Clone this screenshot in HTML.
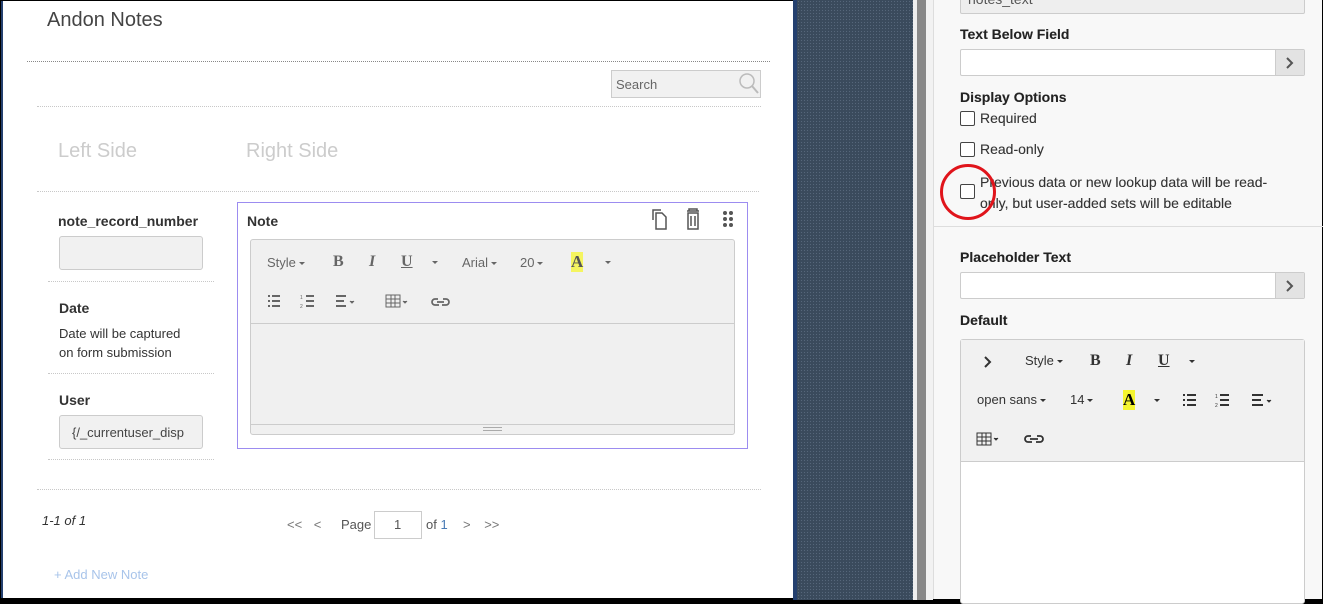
<!DOCTYPE html>
<html><head><meta charset="utf-8"><style>
*{box-sizing:border-box;margin:0;padding:0}
body{width:1323px;height:600px;overflow:hidden;background:#000;font-family:"Liberation Sans",sans-serif;position:relative}
.a{position:absolute}
.t{position:absolute;white-space:nowrap}
.dot{position:absolute;height:0;border-top:1px dotted #c8c8c8}
.tb{color:#666;font-size:13px}
.car{display:inline-block;width:0;height:0;border-left:3px solid transparent;border-right:3px solid transparent;border-top:3px solid #666;vertical-align:middle;margin-left:3px}
.cb{position:absolute;width:15px;height:15px;border:1px solid #444;border-radius:2px;background:#fff}
.rl{position:absolute;font-size:14px;color:#222;white-space:nowrap;font-weight:bold;-webkit-text-stroke:0.1px}
.rl.n{font-weight:normal}
.inp{position:absolute;height:27px;background:#fff;border:1px solid #ccc;border-radius:2px}
.btn{position:absolute;right:0;top:0;width:29px;height:25px;background:#e3e3e3;border-left:1px solid #ccc}
</style></head><body>
<!-- left panel -->
<div class="a" style="left:1px;top:1px;width:792px;height:597px;background:#fff;border-left:2px solid #24406f"></div>
<div class="t" style="left:47px;top:9px;font-size:20px;color:#444">Andon Notes</div>
<div class="dot" style="left:27px;top:61px;width:743px;border-top:1px dotted #888"></div>
<div class="a" style="left:611px;top:70px;width:150px;height:28px;background:#f1f1f1;border:1px solid #ccc"></div>
<div class="t" style="left:616px;top:77px;font-size:13px;color:#666">Search</div>
<svg class="a" style="left:738px;top:72px" width="22" height="24"><circle cx="9" cy="9" r="7" fill="none" stroke="#bbb" stroke-width="1.5"/><line x1="14" y1="14" x2="20" y2="21" stroke="#bbb" stroke-width="2"/></svg>
<div class="dot" style="left:37px;top:106px;width:724px"></div>
<div class="t" style="left:58px;top:140px;font-size:20px;color:#ccc">Left Side</div>
<div class="t" style="left:246px;top:140px;font-size:20px;color:#ccc">Right Side</div>
<div class="dot" style="left:37px;top:191px;width:722px"></div>
<div class="t" style="left:58px;top:213px;font-size:14px;font-weight:bold;color:#333">note_record_number</div>
<div class="a" style="left:59px;top:236px;width:144px;height:34px;background:#f1f1f1;border:1px solid #ccc;border-radius:3px"></div>
<div class="dot" style="left:48px;top:281px;width:166px"></div>
<div class="t" style="left:59px;top:300px;font-size:14px;font-weight:bold;color:#333">Date</div>
<div class="t" style="left:59px;top:324px;font-size:13px;color:#333;line-height:19px">Date will be captured<br>on form submission</div>
<div class="dot" style="left:48px;top:373px;width:166px"></div>
<div class="t" style="left:59px;top:392px;font-size:14px;font-weight:bold;color:#333">User</div>
<div class="a" style="left:59px;top:415px;width:144px;height:34px;background:#f1f1f1;border:1px solid #ccc;border-radius:3px"></div>
<div class="t" style="left:72px;top:425px;font-size:13px;color:#444">{/_currentuser_disp</div>
<div class="dot" style="left:48px;top:459px;width:166px"></div>
<!-- note box -->
<div class="a" style="left:237px;top:202px;width:511px;height:247px;border:1px solid #9c8cf0;background:#fff"></div>
<div class="t" style="left:247px;top:213px;font-size:14px;font-weight:bold;color:#333">Note</div>
<svg class="a" style="left:650px;top:207px" width="90" height="24" fill="none" stroke="#555" stroke-width="1.5">
<path d="M3 13V3h8M6 6h6l4 4v12H6z"/>
<path d="M37 4h12M39 4v-2h8v2M38 6h10v16H38zM41 9v10M45 9v10"/>
<g fill="#555" stroke="none"><circle cx="75" cy="6" r="2"/><circle cx="81" cy="6" r="2"/><circle cx="75" cy="12" r="2"/><circle cx="81" cy="12" r="2"/><circle cx="75" cy="18" r="2"/><circle cx="81" cy="18" r="2"/></g>
</svg>
<div class="a" style="left:250px;top:239px;width:485px;height:196px;background:#f0f0f0;border:1px solid #ccc;border-radius:3px"></div>
<div class="a" style="left:251px;top:323px;width:483px;height:1px;background:#ccc"></div>
<div class="a" style="left:251px;top:424px;width:483px;height:1px;background:#ccc"></div>
<div class="a" style="left:483px;top:427px;width:19px;height:4px;border-top:1px solid #aaa;border-bottom:1px solid #aaa"></div>
<div class="t tb" style="left:267px;top:255px">Style<span class="car"></span></div>
<div class="t" style="left:333px;top:253px;font:bold 16px 'Liberation Serif',serif;color:#666">B</div>
<div class="t" style="left:369px;top:253px;font:italic bold 16px 'Liberation Serif',serif;color:#666">I</div>
<div class="t" style="left:401px;top:253px;font:bold 16px 'Liberation Serif',serif;color:#666;text-decoration:underline">U</div>
<div class="t" style="left:429px;top:254px"><span class="car"></span></div>
<div class="t tb" style="left:462px;top:255px">Arial<span class="car"></span></div>
<div class="t tb" style="left:520px;top:255px">20<span class="car"></span></div>
<div class="t" style="left:571px;top:252px;font:bold 17px 'Liberation Serif',serif;color:#555;background:#f5f560;line-height:20px">A</div>
<div class="t" style="left:602px;top:254px"><span class="car"></span></div>
<svg class="a" style="left:266px;top:293px" width="190" height="16" stroke="#666" stroke-width="2" fill="none">
<path d="M2 3h2M6 3h8M2 8h2M6 8h8M2 13h2M6 13h8"/>
<path d="M40 3h8M40 8h8M40 13h8"/><text x="34" y="6" font-size="5" fill="#666" stroke="none">1</text><text x="34" y="15" font-size="5" fill="#666" stroke="none">2</text>
<path d="M70 3h10M70 8h8M70 13h10"/><path d="M84 8l2 2 2-2" stroke-width="1" fill="#666"/>
<path d="M120 2h14v12h-14zM120 6h14M120 10h14M125 2v12M129 2v12" stroke-width="1"/><path d="M137 8l2 2 2-2" stroke-width="1" fill="#666"/>
<path d="M172 6h-3a3 3 0 0 0 0 6h4M177 6h3a3 3 0 0 1 0 6h-4M171 9h7" stroke-width="1.7"/>
</svg>
<div class="dot" style="left:37px;top:489px;width:724px"></div>
<div class="t" style="left:42px;top:513px;font-size:13px;font-style:italic;color:#333">1-1 of 1</div>
<div class="t" style="left:287px;top:517px;font-size:13px;color:#777;word-spacing:8px">&lt;&lt; &lt;</div>
<div class="t" style="left:341px;top:517px;font-size:13px;color:#555">Page</div>
<div class="a" style="left:374px;top:511px;width:48px;height:28px;border:1px solid #ccc;background:#fff"></div>
<div class="t" style="left:394px;top:517px;font-size:13px;color:#555">1</div>
<div class="t" style="left:426px;top:517px;font-size:13px;color:#555">of <span style="color:#4a7bb5">1</span></div>
<div class="t" style="left:463px;top:517px;font-size:13px;color:#777;word-spacing:10px">&gt; &gt;&gt;</div>
<div class="t" style="left:54px;top:567px;font-size:13px;color:#a8c4ea">+ Add New Note</div>
<!-- middle -->
<div class="a" style="left:793px;top:0;width:4px;height:600px;background:#24406f"></div>
<div class="a" style="left:797px;top:0;width:116px;height:600px;background:#3a4a5c;background-image:radial-gradient(#56667a 0.6px,transparent 0.8px);background-size:3px 3px"></div>
<div class="a" style="left:913px;top:0;width:4px;height:600px;background:#eee"></div>
<div class="a" style="left:917px;top:0;width:9px;height:600px;background:#888"></div>
<div class="a" style="left:926px;top:0;width:7px;height:600px;background:#f2f2f2"></div>
<div class="a" style="left:933px;top:0;width:389px;height:599px;background:#f8f8f8;border-left:1px solid #ddd"></div>
<!-- right panel -->
<div class="a" style="left:960px;top:-2px;width:345px;height:16px;background:#eee;border:1px solid #ccc;border-radius:2px"></div>
<div class="t" style="left:968px;top:-9px;font-size:14px;color:#555">notes_text</div>
<div class="rl" style="left:960px;top:26px">Text Below Field</div>
<div class="inp" style="left:960px;top:49px;width:345px"><div class="btn"></div></div>
<svg class="a" style="left:1284px;top:56px" width="12" height="14"><path d="M3 2l5 5-5 5" fill="none" stroke="#555" stroke-width="2"/></svg>
<div class="rl" style="left:960px;top:89px">Display Options</div>
<div class="cb" style="left:960px;top:111px"></div>
<div class="rl n" style="left:980px;top:110px;color:#333">Required</div>
<div class="cb" style="left:960px;top:142px"></div>
<div class="rl n" style="left:980px;top:141px;color:#333">Read-only</div>
<div class="cb" style="left:960px;top:184px"></div>
<div class="rl n" style="left:980px;top:172px;color:#333;line-height:21px">Previous data or new lookup data will be read-<br>only, but user-added sets will be editable</div>
<div class="a" style="left:940px;top:164px;width:56px;height:56px;border:3px solid #e0141b;border-radius:50%"></div>
<div class="a" style="left:934px;top:226px;width:389px;height:1px;background:#ddd"></div>
<div class="rl" style="left:960px;top:249px">Placeholder Text</div>
<div class="inp" style="left:960px;top:272px;width:345px"><div class="btn"></div></div>
<svg class="a" style="left:1284px;top:279px" width="12" height="14"><path d="M3 2l5 5-5 5" fill="none" stroke="#555" stroke-width="2"/></svg>
<div class="rl" style="left:960px;top:312px">Default</div>
<div class="a" style="left:960px;top:339px;width:345px;height:265px;background:#fff;border:1px solid #ccc;border-radius:3px"></div>
<div class="a" style="left:961px;top:340px;width:343px;height:122px;background:#f1f1f1;border-bottom:1px solid #ccc"></div>
<svg class="a" style="left:983px;top:355px" width="10" height="14"><path d="M2 2l5 5-5 5" fill="none" stroke="#333" stroke-width="2"/></svg>
<div class="t" style="left:1025px;top:353px;font-size:13px;color:#333">Style<span class="car" style="border-top-color:#333"></span></div>
<div class="t" style="left:1090px;top:352px;font:bold 16px 'Liberation Serif',serif;color:#333">B</div>
<div class="t" style="left:1126px;top:352px;font:italic bold 16px 'Liberation Serif',serif;color:#333">I</div>
<div class="t" style="left:1158px;top:352px;font:bold 16px 'Liberation Serif',serif;color:#333;text-decoration:underline">U</div>
<div class="t" style="left:1186px;top:353px"><span class="car" style="border-top-color:#333"></span></div>
<div class="t" style="left:977px;top:392px;font-size:13px;color:#333">open sans<span class="car" style="border-top-color:#333"></span></div>
<div class="t" style="left:1070px;top:392px;font-size:13px;color:#333">14<span class="car" style="border-top-color:#333"></span></div>
<div class="t" style="left:1123px;top:390px;font:bold 17px 'Liberation Serif',serif;color:#000;background:#f5f530;line-height:20px">A</div>
<div class="t" style="left:1151px;top:392px"><span class="car" style="border-top-color:#333"></span></div>
<svg class="a" style="left:1182px;top:392px" width="100" height="16" stroke="#333" stroke-width="2" fill="none">
<path d="M1 3h2M5 3h9M1 8h2M5 8h9M1 13h2M5 13h9"/>
<path d="M38 3h9M38 8h9M38 13h9"/><text x="33" y="6" font-size="5" fill="#333" stroke="none">1</text><text x="33" y="15" font-size="5" fill="#333" stroke="none">2</text>
<path d="M70 3h11M70 8h9M70 13h11"/><path d="M85 8l2 2 2-2" stroke-width="1" fill="#333"/>
</svg>
<svg class="a" style="left:976px;top:431px" width="70" height="16" fill="none" stroke="#333">
<path d="M1 2h14v12H1zM1 6h14M1 10h14M6 2v12M10 2v12" stroke-width="1"/><path d="M18 7l2 2 2-2" fill="#333"/>
<path d="M55 5h-3a3 3 0 0 0 0 6h4M61 5h3a3 3 0 0 1 0 6h-4M54 8h8" stroke-width="1.8"/>
</svg>
</body></html>
